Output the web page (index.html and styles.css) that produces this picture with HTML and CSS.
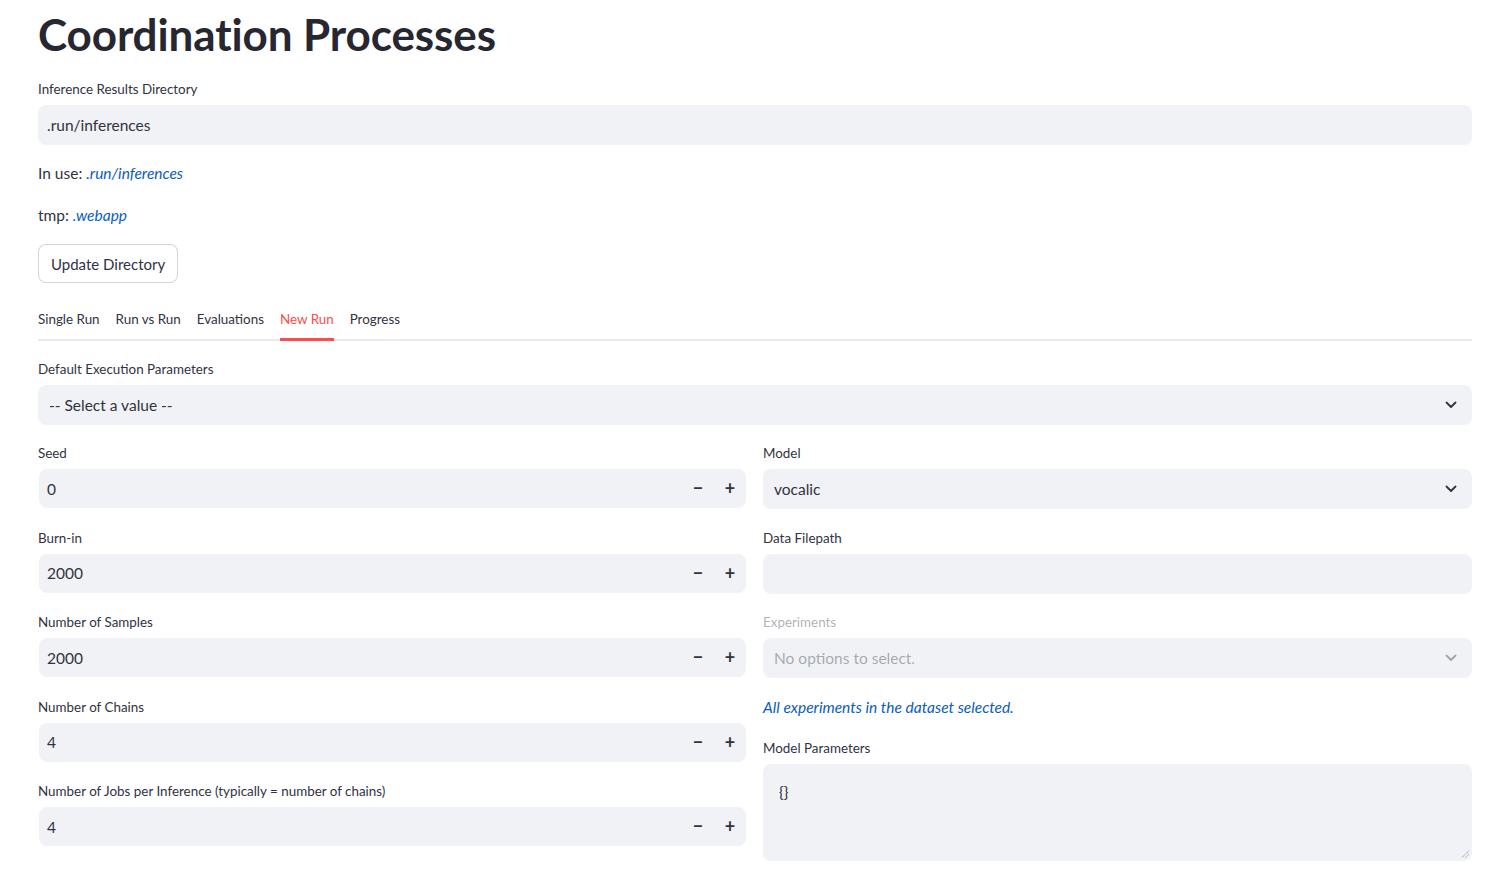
FILE: index.html
```html
<!DOCTYPE html>
<html>
<head>
<meta charset="utf-8">
<link rel="stylesheet" href="styles.css">
</head>
<body>
<main class="main">
  <h1 class="title">Coordination Processes</h1>

  <div class="field">
    <label class="label">Inference Results Directory</label>
    <div class="textbox"><span class="val">.run/inferences</span></div>
  </div>

  <p class="md">In use: <em class="link">.run/inferences</em></p>
  <p class="md">tmp: <em class="link">.webapp</em></p>

  <div><button class="btn">Update Directory</button></div>

  <div class="tabs">
    <span class="tab">Single Run</span>
    <span class="tab">Run vs Run</span>
    <span class="tab">Evaluations</span>
    <span class="tab active">New Run</span>
    <span class="tab">Progress</span>
  </div>

  <div class="field">
    <label class="label">Default Execution Parameters</label>
    <div class="select"><span class="val">-- Select a value --</span>
      <svg class="chev" viewBox="0 0 12 8" width="12" height="8"><path d="M1.5 1.5 L6 6 L10.5 1.5" fill="none" stroke="#31333f" stroke-width="1.8" stroke-linecap="round" stroke-linejoin="round"/></svg>
    </div>
  </div>

  <div class="cols">
    <div class="col">
      <div class="field">
        <label class="label">Seed</label>
        <div class="num"><span class="val">0</span><span class="step">&minus;</span><span class="step">+</span></div>
      </div>
      <div class="field">
        <label class="label">Burn-in</label>
        <div class="num"><span class="val">2000</span><span class="step">&minus;</span><span class="step">+</span></div>
      </div>
      <div class="field">
        <label class="label">Number of Samples</label>
        <div class="num"><span class="val">2000</span><span class="step">&minus;</span><span class="step">+</span></div>
      </div>
      <div class="field">
        <label class="label">Number of Chains</label>
        <div class="num"><span class="val">4</span><span class="step">&minus;</span><span class="step">+</span></div>
      </div>
      <div class="field">
        <label class="label">Number of Jobs per Inference (typically = number of chains)</label>
        <div class="num"><span class="val">4</span><span class="step">&minus;</span><span class="step">+</span></div>
      </div>
    </div>
    <div class="col">
      <div class="field">
        <label class="label">Model</label>
        <div class="select"><span class="val">vocalic</span>
          <svg class="chev" viewBox="0 0 12 8" width="12" height="8"><path d="M1.5 1.5 L6 6 L10.5 1.5" fill="none" stroke="#31333f" stroke-width="1.8" stroke-linecap="round" stroke-linejoin="round"/></svg>
        </div>
      </div>
      <div class="field">
        <label class="label">Data Filepath</label>
        <div class="textbox"></div>
      </div>
      <div class="field">
        <label class="label disabled">Experiments</label>
        <div class="select disabled"><span class="val">No options to select.</span>
          <svg class="chev" viewBox="0 0 12 8" width="12" height="8"><path d="M1.5 1.5 L6 6 L10.5 1.5" fill="none" stroke="#a3a4ab" stroke-width="1.8" stroke-linecap="round" stroke-linejoin="round"/></svg>
        </div>
      </div>
      <p class="md caption"><em class="link">All experiments in the dataset selected.</em></p>
      <div class="field">
        <label class="label">Model Parameters</label>
        <div class="textarea"><span class="val">{}</span>
          <svg class="grip" viewBox="0 0 8 8" width="8" height="8"><path d="M7.5 1 L1 7.5 M7.5 4.5 L4.5 7.5" stroke="#6b6d76" stroke-width="0.9" stroke-dasharray="1 0.8"/></svg>
        </div>
      </div>
    </div>
  </div>
</main>
</body>
</html>
```

FILE: styles.css
```css
* { box-sizing: border-box; }
html, body { margin: 0; padding: 0; background: #ffffff; }
body {
  font-family: Lato, "Noto Sans", "Liberation Sans", sans-serif;
  color: #31333f;
}
.main {
  width: 1491px;
  padding: 8px 19px 0 38px;
  display: flex;
  flex-direction: column;
  gap: 16px;
}
.title {
  margin: 0;
  font-size: 44px;
  font-weight: 700;
  line-height: 53px;
  height: 53px;
  letter-spacing: -0.1px;
  color: #262730;
}
.field { display: flex; flex-direction: column; }
.label {
  font-size: 13.4px;
  line-height: 24px;
  height: 24px;
  margin-bottom: 4px;
  color: #31333f;
  white-space: nowrap;
}
.label.disabled { color: rgba(49, 51, 63, 0.4); }
.val { font-size: 15.5px; line-height: 20px; }
.textbox {
  height: 40px;
  background: #f0f2f6;
  border-radius: 8px;
  display: flex;
  align-items: center;
  padding: 0 9px;
}
.md {
  margin: 0;
  font-size: 15.5px;
  line-height: 25.5px;
  height: 25.5px;
}
.link { color: #0b5cc4; font-style: italic; }
.caption { height: 24px; line-height: 24px; margin-bottom: 1px; }
.btn {
  height: 39px;
  padding: 0 12px;
  background: #ffffff;
  border: 1px solid rgba(49, 51, 63, 0.2);
  border-radius: 8px;
  font-family: inherit;
  font-size: 15px;
  color: #31333f;
}
.tabs {
  display: flex;
  gap: 16px;
  height: 42px;
  border-bottom: 2px solid #e6e9ef;
}
.tab {
  font-size: 13.4px;
  line-height: 40px;
  height: 40px;
  color: #31333f;
  white-space: nowrap;
}
.tab.active {
  color: #ff4b4b;
  border-bottom: 3px solid #ff4b4b;
  height: 42px;
  line-height: 40px;
}
.select {
  height: 40px;
  background: #f0f2f6;
  border-radius: 8px;
  display: flex;
  align-items: center;
  justify-content: space-between;
  padding: 0 15px 0 11px;
}
.select.disabled .val { color: rgba(49, 51, 63, 0.4); }
.cols {
  display: grid;
  grid-template-columns: 708px 709px;
  column-gap: 17px;
  align-items: start;
}
.col { display: flex; flex-direction: column; gap: 16.5px; }
.num {
  height: 39px;
  margin: 0 0 1px 1px;
  background: #f0f2f6;
  border-radius: 8px;
  display: flex;
  align-items: center;
  padding-left: 8px;
}
.num .val { flex: 1; }
.step {
  width: 32px;
  text-align: center;
  font-size: 18px;
  font-weight: 700;
  line-height: 39px;
  color: #31333f;
}
.textarea {
  position: relative;
  height: 97px;
  background: #f0f2f6;
  border-radius: 8px;
  padding: 18px 16px;
}
.grip { position: absolute; right: 3px; bottom: 3px; }
```
